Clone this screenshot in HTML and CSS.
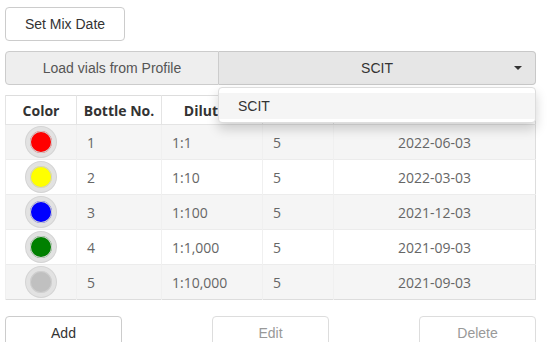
FILE: index.html
```html
<!DOCTYPE html>
<html lang="en">
<head>
  <meta charset="UTF-8" />
  <title>Vials</title>
  <link rel="stylesheet" href="styles.css">
</head>
<body>

<div class="page">
  <button class="btn mix-btn">Set Mix Date</button>

  <!-- Profile picker -->
  <div class="profile-row">
    <button class="btn load-btn">Load vials from Profile</button>
    <div class="select">
      <span>SCIT</span>
      <span class="caret"></span>
    </div>
    <ul class="menu">
      <li class="menu-item">SCIT</li>
    </ul>
  </div>

  <table class="vials">
    <thead>
      <tr>
        <th class="col-color">Color</th>
        <th class="col-bottle">Bottle No.</th>
        <th class="col-dil">Dilution</th>
        <th class="col-vol">Volume</th>
        <th class="col-date">Expires</th>
      </tr>
    </thead>
    <tbody>
      <tr>
        <td class="col-color"><span class="dot red"></span></td>
        <td>1</td><td>1:1</td><td>5</td><td class="col-date">2022-06-03</td>
      </tr>
      <tr>
        <td class="col-color"><span class="dot yellow"></span></td>
        <td>2</td><td>1:10</td><td>5</td><td class="col-date">2022-03-03</td>
      </tr>
      <tr>
        <td class="col-color"><span class="dot blue"></span></td>
        <td>3</td><td>1:100</td><td>5</td><td class="col-date">2021-12-03</td>
      </tr>
      <tr>
        <td class="col-color"><span class="dot green"></span></td>
        <td>4</td><td>1:1,000</td><td>5</td><td class="col-date">2021-09-03</td>
      </tr>
      <tr>
        <td class="col-color"><span class="dot silver"></span></td>
        <td>5</td><td>1:10,000</td><td>5</td><td class="col-date">2021-09-03</td>
      </tr>
    </tbody>
  </table>

  <div class="actions">
    <button class="btn">Add</button>
    <button class="btn" disabled>Edit</button>
    <button class="btn" disabled>Delete</button>
  </div>
</div>

</body>
</html>
```

FILE: styles.css
```css
/* Global */
body {
  margin: 0;
  background: #fff;
  font-family: 'Open Sans', sans-serif;
}

.page {
  box-sizing: border-box;
  height: 342px;
  overflow: hidden;
  padding: 7px 20px 0 5px;
}

/* Buttons */
.btn {
  box-sizing: border-box;
  height: 34px;
  background: #fff;
  border: 1px solid #ccc;
  border-radius: 4px;
  font-family: 'Liberation Sans', Arial, sans-serif;
  font-size: 14px;
  color: #333;
  padding: 0;
}

.btn:disabled {
  color: #999;
  border-color: #ddd;
}

.mix-btn {
  display: block;
  width: 120px;
}

/* Profile picker */
.profile-row {
  position: relative;
  display: flex;
  height: 34px;
  margin-top: 10px;
}

.load-btn {
  width: 214px;
  background: #eee;
  color: #555;
  border-radius: 4px 0 0 4px;
}

.select {
  box-sizing: border-box;
  flex: 1;
  display: flex;
  align-items: center;
  justify-content: center;
  position: relative;
  background: #e6e6e6;
  border: 1px solid #c8c8c8;
  border-left: none;
  border-radius: 0 4px 4px 0;
  font-family: 'Liberation Sans', Arial, sans-serif;
  font-size: 14px;
  color: #333;
}

.caret {
  position: absolute;
  right: 13px;
  top: 14px;
  border-left: 4px solid transparent;
  border-right: 4px solid transparent;
  border-top: 4px solid #333;
}

.menu {
  position: absolute;
  top: 36px;
  left: 213px;
  right: 0;
  box-sizing: border-box;
  height: 36px;
  margin: 0;
  padding: 5px 0;
  list-style: none;
  background: #fff;
  border: 1px solid #ddd;
  border-radius: 4px;
  box-shadow: 0 6px 12px rgba(0, 0, 0, 0.175);
  z-index: 2;
}

.menu-item {
  height: 26px;
  line-height: 26px;
  padding-left: 19px;
  background: #f5f5f5;
  font-family: 'Liberation Sans', Arial, sans-serif;
  font-size: 14px;
  color: #333;
}

/* Table */
.vials {
  width: 100%;
  margin-top: 10px;
  border-collapse: collapse;
  border: 1px solid #ddd;
  font-size: 14px;
  color: #666;
}

.vials th {
  height: 28px;
  padding: 0;
  font-weight: bold;
  color: #333;
  text-align: center;
  border-left: 1px solid #e4e4e4;
  border-bottom: 1px solid #e4e4e4;
}

.vials td {
  height: 34px;
  padding: 0 0 0 10px;
  border-left: 1px solid #f0f0f0;
}

.vials tbody tr:nth-child(odd) {
  background: #f5f5f5;
}

.vials tbody tr + tr td {
  border-top: 1px solid #ececec;
}

.col-color { width: 70px; }
.col-bottle { width: 84px; }
.col-dil { width: 100px; }
.col-vol { width: 70px; }

.vials td.col-color {
  padding: 0;
  text-align: center;
}

.vials td.col-date {
  text-align: center;
  padding-left: 0;
}

.dot {
  display: inline-block;
  vertical-align: middle;
  box-sizing: border-box;
  width: 30px;
  height: 30px;
  border-radius: 50%;
  border: 4px solid #e2e2e2;
  box-shadow: 0 0 0 1px #d4d4d4, inset 0 0 0 1px #cfcfcf;
}

.red { background: #f00; }
.yellow { background: #ff0; }
.blue { background: #00f; }
.green { background: #008000; }
.silver { background: #c0c0c0; }

/* Bottom actions */
.actions {
  display: flex;
  justify-content: space-between;
  margin-top: 16px;
}

.actions .btn {
  width: 117px;
}
```
